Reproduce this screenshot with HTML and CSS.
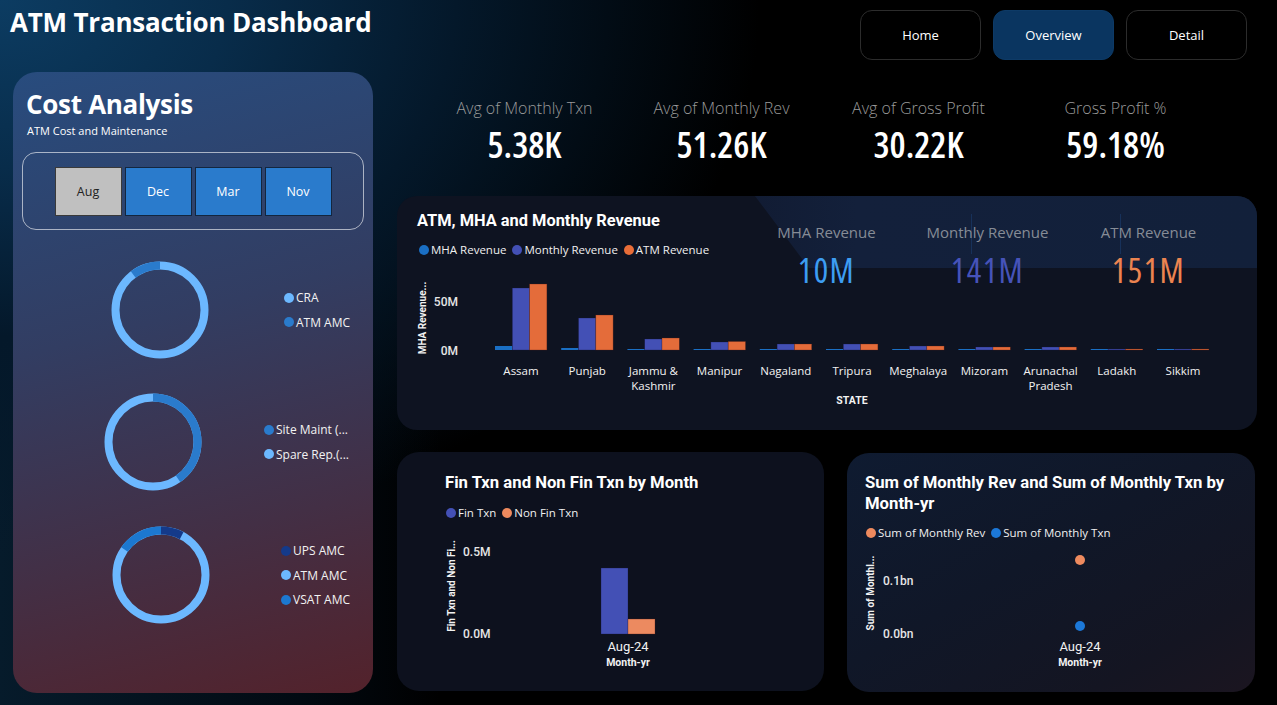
FILE: index.html
```html
<!DOCTYPE html>
<html lang="en">
<head>
<meta charset="utf-8">
<title>ATM Transaction Dashboard</title>
<link rel="stylesheet" href="styles.css">
</head>
<body>
<div class="dash">
  <div class="left">
    <h1 class="title">ATM Transaction Dashboard</h1>
    <section class="cost">
      <h2 class="cost-title">Cost Analysis</h2>
      <p class="cost-sub">ATM Cost and Maintenance</p>
      <div class="slicer">
        <div class="seg on">Aug</div>
        <div class="seg">Dec</div>
        <div class="seg">Mar</div>
        <div class="seg">Nov</div>
      </div>
      <div class="donuts">
        <div class="drow d1">
          <svg class="donut" viewBox="0 0 106 106">
            <circle class="ring c-light" cx="53" cy="53" r="44.5" pathLength="100"/>
            <circle class="ring c-mid" cx="53" cy="53" r="44.5" pathLength="100" stroke-dasharray="10.3 89.7" stroke-dashoffset="-89.7"/>
          </svg>
          <div class="legend">
            <div class="li"><span class="dot b-light"></span>CRA</div>
            <div class="li"><span class="dot b-mid"></span>ATM AMC</div>
          </div>
        </div>
        <div class="drow d2">
          <svg class="donut" viewBox="0 0 106 106">
            <circle class="ring c-light" cx="53" cy="53" r="44.5" pathLength="100"/>
            <circle class="ring c-mid" cx="53" cy="53" r="44.5" pathLength="100" stroke-dasharray="40.5 59.5" stroke-dashoffset="0"/>
          </svg>
          <div class="legend">
            <div class="li"><span class="dot b-mid"></span>Site Maint (...</div>
            <div class="li"><span class="dot b-light"></span>Spare Rep.(...</div>
          </div>
        </div>
        <div class="drow d3">
          <svg class="donut" viewBox="0 0 106 106">
            <circle class="ring c-light" cx="53" cy="53" r="44.5" pathLength="100"/>
            <circle class="ring c-dark" cx="53" cy="53" r="44.5" pathLength="100" stroke-dasharray="7.7 92.3" stroke-dashoffset="0"/>
            <circle class="ring c-vsat" cx="53" cy="53" r="44.5" pathLength="100" stroke-dasharray="15.3 84.7" stroke-dashoffset="-84.7"/>
          </svg>
          <div class="legend">
            <div class="li"><span class="dot b-dark"></span>UPS AMC</div>
            <div class="li"><span class="dot b-light"></span>ATM AMC</div>
            <div class="li"><span class="dot b-vsat"></span>VSAT AMC</div>
          </div>
        </div>
      </div>
    </section>
  </div>

  <div class="right">
    <nav class="nav">
      <div class="btn">Home</div>
      <div class="btn on">Overview</div>
      <div class="btn">Detail</div>
    </nav>

    <div class="kpis">
      <div class="kpi"><div class="kpi-l">Avg of Monthly Txn</div><div class="kpi-v">5.38K</div></div>
      <div class="kpi"><div class="kpi-l">Avg of Monthly Rev</div><div class="kpi-v">51.26K</div></div>
      <div class="kpi"><div class="kpi-l">Avg of Gross Profit</div><div class="kpi-v">30.22K</div></div>
      <div class="kpi"><div class="kpi-l">Gross Profit %</div><div class="kpi-v">59.18%</div></div>
    </div>

    <section class="card rev">
      <h3 class="card-title">ATM, MHA and Monthly Revenue</h3>
      <div class="clegend">
        <span class="cli"><span class="dot b-mha"></span>MHA Revenue</span>
        <span class="cli"><span class="dot b-mon"></span>Monthly Revenue</span>
        <span class="cli"><span class="dot b-atm"></span>ATM Revenue</span>
      </div>
      <svg class="plot rev-plot" width="860" height="164" viewBox="0 0 860 164">
        <text class="ytitle" transform="translate(29 52) rotate(-90)" text-anchor="middle">MHA Revenue...</text>
        <text class="ynum" x="61" y="40" text-anchor="end">50M</text>
        <text class="ynum" x="61" y="89" text-anchor="end">0M</text>
        <g transform="translate(124 0)"><rect class="r-mha" x="-26" y="80" width="17.3" height="4"/><rect class="r-mon" x="-8.7" y="22" width="17.3" height="62"/><rect class="r-atm" x="8.6" y="18" width="17.3" height="66"/></g>
        <g transform="translate(190.2 0)"><rect class="r-mha" x="-26" y="82" width="17.3" height="2"/><rect class="r-mon" x="-8.7" y="52" width="17.3" height="32"/><rect class="r-atm" x="8.6" y="49" width="17.3" height="35"/></g>
        <g transform="translate(256.4 0)"><rect class="r-mha" x="-26" y="83" width="17.3" height="1"/><rect class="r-mon" x="-8.7" y="73" width="17.3" height="11"/><rect class="r-atm" x="8.6" y="72" width="17.3" height="12"/></g>
        <g transform="translate(322.6 0)"><rect class="r-mha" x="-26" y="83" width="17.3" height="1"/><rect class="r-mon" x="-8.7" y="76" width="17.3" height="8"/><rect class="r-atm" x="8.6" y="75.5" width="17.3" height="8.5"/></g>
        <g transform="translate(388.8 0)"><rect class="r-mha" x="-26" y="83" width="17.3" height="1"/><rect class="r-mon" x="-8.7" y="78" width="17.3" height="6"/><rect class="r-atm" x="8.6" y="78" width="17.3" height="6"/></g>
        <g transform="translate(455 0)"><rect class="r-mha" x="-26" y="83" width="17.3" height="1"/><rect class="r-mon" x="-8.7" y="78" width="17.3" height="6"/><rect class="r-atm" x="8.6" y="78" width="17.3" height="6"/></g>
        <g transform="translate(521.2 0)"><rect class="r-mha" x="-26" y="83" width="17.3" height="1"/><rect class="r-mon" x="-8.7" y="80" width="17.3" height="4"/><rect class="r-atm" x="8.6" y="80" width="17.3" height="4"/></g>
        <g transform="translate(587.4 0)"><rect class="r-mha" x="-26" y="83" width="17.3" height="1"/><rect class="r-mon" x="-8.7" y="81" width="17.3" height="3"/><rect class="r-atm" x="8.6" y="81" width="17.3" height="3"/></g>
        <g transform="translate(653.6 0)"><rect class="r-mha" x="-26" y="83" width="17.3" height="1"/><rect class="r-mon" x="-8.7" y="81" width="17.3" height="3"/><rect class="r-atm" x="8.6" y="81" width="17.3" height="3"/></g>
        <g transform="translate(719.8 0)"><rect class="r-mha" x="-26" y="83" width="17.3" height="1"/><rect class="r-mon" x="-8.7" y="83" width="17.3" height="1"/><rect class="r-atm" x="8.6" y="83" width="17.3" height="1"/></g>
        <g transform="translate(786 0)"><rect class="r-mha" x="-26" y="83" width="17.3" height="1"/><rect class="r-mon" x="-8.7" y="83" width="17.3" height="1"/><rect class="r-atm" x="8.6" y="83" width="17.3" height="1"/></g>
        <text class="xlab" x="124" y="109" text-anchor="middle">Assam</text>
        <text class="xlab" x="190.2" y="109" text-anchor="middle">Punjab</text>
        <text class="xlab" x="256.4" y="109" text-anchor="middle">Jammu &amp;</text>
        <text class="xlab" x="256.4" y="124" text-anchor="middle">Kashmir</text>
        <text class="xlab" x="322.6" y="109" text-anchor="middle">Manipur</text>
        <text class="xlab" x="388.8" y="109" text-anchor="middle">Nagaland</text>
        <text class="xlab" x="455" y="109" text-anchor="middle">Tripura</text>
        <text class="xlab" x="521.2" y="109" text-anchor="middle">Meghalaya</text>
        <text class="xlab" x="587.4" y="109" text-anchor="middle">Mizoram</text>
        <text class="xlab" x="653.6" y="109" text-anchor="middle">Arunachal</text>
        <text class="xlab" x="653.6" y="124" text-anchor="middle">Pradesh</text>
        <text class="xlab" x="719.8" y="109" text-anchor="middle">Ladakh</text>
        <text class="xlab" x="786" y="109" text-anchor="middle">Sikkim</text>
        <text class="xtitle" x="455" y="138" text-anchor="middle">STATE</text>
      </svg>
      <div class="rev-kpis">
        <span class="sep sep1"></span>
        <span class="sep sep2"></span>
        <div class="rk"><div class="rk-l">MHA Revenue</div><div class="rk-v v-mha">10M</div></div>
        <div class="rk"><div class="rk-l">Monthly Revenue</div><div class="rk-v v-mon">141M</div></div>
        <div class="rk"><div class="rk-l">ATM Revenue</div><div class="rk-v v-atm">151M</div></div>
      </div>
    </section>

    <div class="bottom">
      <section class="card fin">
        <h3 class="card-title">Fin Txn and Non Fin Txn by Month</h3>
        <div class="clegend">
          <span class="cli"><span class="dot b-mon"></span>Fin Txn</span>
          <span class="cli"><span class="dot b-non"></span>Non Fin Txn</span>
        </div>
        <svg class="plot" width="427" height="164" viewBox="0 0 427 164">
          <text class="ytitle" transform="translate(58 62) rotate(-90)" text-anchor="middle">Fin Txn and Non Fi...</text>
          <text class="ynum" x="66" y="32">0.5M</text>
          <text class="ynum" x="66" y="114">0.0M</text>
          <rect class="r-mon" x="204" y="44" width="27" height="66"/>
          <rect class="r-non" x="231" y="95" width="27" height="15"/>
          <text class="xlab big" x="231" y="127" text-anchor="middle">Aug-24</text>
          <text class="xtitle" x="231" y="142" text-anchor="middle">Month-yr</text>
        </svg>
      </section>
      <section class="card sum">
        <h3 class="card-title">Sum of Monthly Rev and Sum of Monthly Txn by<br>Month-yr</h3>
        <div class="clegend">
          <span class="cli"><span class="dot b-non"></span>Sum of Monthly Rev</span>
          <span class="cli"><span class="dot b-txn"></span>Sum of Monthly Txn</span>
        </div>
        <svg class="plot" width="408" height="151" viewBox="0 0 408 151">
          <text class="ytitle" transform="translate(27 52) rotate(-90)" text-anchor="middle">Sum of Monthl...</text>
          <text class="ynum" x="36" y="44">0.1bn</text>
          <text class="ynum" x="36" y="97">0.0bn</text>
          <circle class="p-rev" cx="233" cy="19" r="5"/>
          <circle class="p-txn" cx="233" cy="85" r="5"/>
          <text class="xlab big" x="233" y="110" text-anchor="middle">Aug-24</text>
          <text class="xtitle" x="233" y="125" text-anchor="middle">Month-yr</text>
        </svg>
      </section>
    </div>
  </div>
</div>
</body>
</html>
```

FILE: styles.css
```css
* { box-sizing: border-box; }

body {
  margin: 0;
  width: 1277px;
  height: 705px;
  overflow: hidden;
  color: #fff;
  font-family: "Open Sans", "Noto Sans", sans-serif;
  background:
    radial-gradient(ellipse 760px 560px at 0 0, #0c3c62 0%, #082c4a 30%, #04182a 60%, rgba(0, 0, 0, 0) 100%),
    linear-gradient(90deg, #061b2b 0, #020a12 300px, #000 440px),
    #000;
}

.dash { display: flex; height: 705px; }

.left { width: 397px; flex: none; }

.title {
  margin: 0;
  height: 72px;
  padding: 6px 0 0 10px;
  font-size: 26px;
  font-weight: 700;
  line-height: 32px;
  letter-spacing: -0.2px;
}

.cost {
  margin-left: 13px;
  width: 360px;
  height: 621px;
  border-radius: 24px;
  padding-top: 16px;
  background: linear-gradient(165deg, #284c7e 0%, #323d62 40%, #432f45 72%, #53222b 100%);
}

.cost-title {
  margin: 0;
  padding-left: 13px;
  font-size: 26px;
  line-height: 32px;
  font-weight: 700;
  letter-spacing: -0.3px;
}

.cost-sub {
  margin: 3px 0 0;
  padding-left: 14px;
  font-size: 11px;
  line-height: 16px;
}

.slicer {
  margin: 13px 0 0 9px;
  width: 342px;
  height: 78px;
  border: 1px solid rgba(255, 255, 255, 0.6);
  border-radius: 14px;
  display: flex;
  justify-content: center;
  align-items: center;
  gap: 3px;
}

.seg {
  width: 67px;
  height: 49px;
  display: flex;
  align-items: center;
  justify-content: center;
  font-size: 12.5px;
  background: #2a7bcc;
  border: 1px solid #13263f;
  color: #fff;
}
.seg.on { background: #c0c0c0; color: #222; border-color: #3a3a3a; }

.donuts { margin-top: 14px; }

.drow { height: 132px; display: flex; align-items: center; }
.drow.d3 { height: 134px; }
.donut { flex: none; width: 106px; height: 106px; }
.d1 .donut { margin-left: 94px; }
.d1 .legend { margin-left: 71px; }
.d2 .donut { margin-left: 87px; }
.d2 .legend { margin-left: 58px; }
.d3 .donut { margin-left: 95px; }
.d3 .legend { margin-left: 67px; }

.ring { fill: none; stroke-width: 8; transform: rotate(-90deg); transform-origin: 53px 53px; }
.c-light { stroke: #6cb8ff; }
.c-mid { stroke: #2a7bcc; }
.c-dark { stroke: #143a8a; }
.c-vsat { stroke: #1c78d0; }

.legend { display: flex; flex-direction: column; gap: 6.5px; }
.li {
  display: flex;
  align-items: center;
  gap: 2px;
  height: 18px;
  font-size: 12px;
  color: #f2f2f2;
  white-space: nowrap;
}
.dot { flex: none; width: 10px; height: 10px; border-radius: 50%; display: inline-block; }
.b-light { background: #6cb8ff; }
.b-mid { background: #2a7bcc; }
.b-dark { background: #143a8a; }
.b-vsat { background: #1c78d0; }
.b-mha { background: #1a6fc4; }
.b-mon { background: #4350b5; }
.b-atm { background: #e86d38; }
.b-non { background: #ee8a5e; }
.b-txn { background: #1c78d8; }

/* right column */
.right { width: 880px; flex: none; }

.nav {
  display: flex;
  justify-content: flex-end;
  gap: 12px;
  height: 60px;
  padding: 10px 30px 0 0;
}
.btn {
  width: 121px;
  height: 50px;
  border-radius: 12px;
  border: 1px solid #2c2c2c;
  background: #000;
  display: flex;
  align-items: center;
  justify-content: center;
  font-size: 13px;
  color: #fff;
}
.btn.on { background: #0a3560; border-color: #0d3a66; }

.kpis { display: flex; padding-left: 29px; margin-top: 38px; }
.kpi { width: 197px; text-align: center; }
.kpi-l { font-size: 16px; line-height: 20px; color: #9a9a9a; font-weight: 300; }
.kpi-v {
  margin-top: 7px;
  font-family: "Open Sans", sans-serif;
  font-stretch: 80%;
  font-size: 36px;
  line-height: 40px;
  font-weight: 600;
  color: #fff;
}

.card {
  position: relative;
  overflow: hidden;
  border-radius: 20px;
  background: #0e1321;
}

.card-title {
  margin: 0;
  font-family: Roboto, "Noto Sans", sans-serif;
  font-weight: 700;
  font-size: 16.7px;
  line-height: 22px;
  color: #fff;
  white-space: nowrap;
}

.clegend {
  display: flex;
  gap: 6px;
  font-size: 11.5px;
  line-height: 16px;
  color: #f0f0f0;
  white-space: nowrap;
}
.cli { display: flex; align-items: center; gap: 2px; }

.plot { display: block; }
.ytitle { font-family: Roboto, sans-serif; font-weight: 700; font-size: 10px; fill: #f2f2f2; }
.ynum { font-family: Roboto, sans-serif; font-weight: 500; font-size: 12px; fill: #e6e6e6; }
.xlab { font-family: "Open Sans", sans-serif; font-size: 11.5px; fill: #f2f2f2; }
.xlab.big { font-family: Roboto, sans-serif; font-size: 13px; }
.xtitle { font-family: Roboto, sans-serif; font-weight: 700; font-size: 10.5px; fill: #f2f2f2; }

.r-mha { fill: #1a6fc4; }
.r-mon { fill: #4350b5; stroke: rgba(20, 20, 60, 0.5); stroke-width: 0.6; }
.r-atm { fill: #e46c3a; stroke: rgba(90, 30, 20, 0.5); stroke-width: 0.6; }
.r-non { fill: #ec8a60; stroke: rgba(90, 30, 20, 0.5); stroke-width: 0.6; }
.p-rev { fill: #ee8a5e; }
.p-txn { fill: #1c78d8; }

/* revenue card */
.rev { width: 860px; height: 234px; margin-top: 31px; }
.rev .card-title { padding: 14px 0 0 20px; font-size: 16.4px; }
.rev .clegend { margin-top: 10px; padding-left: 22px; }
.rev-plot { margin-top: 8px; }

.rev-kpis {
  position: absolute;
  top: 0;
  left: 340px;
  right: 0;
  height: 100px;
  display: flex;
  padding-left: 9px;
}
.rev-kpis::before {
  content: "";
  position: absolute;
  top: 0;
  left: 0;
  right: 0;
  height: 72px;
  clip-path: polygon(18px 0, 100% 0, 100% 100%, 72px 100%);
  background: linear-gradient(90deg, #111b32 0px, #13203b 120px, #12203a 100%);
}
.sep { position: absolute; top: 18px; width: 1px; height: 40px; background: #17315a; }
.sep1 { left: 234px; }
.sep2 { left: 383px; }
.rk { position: relative; width: 161px; text-align: center; }
.rk-l { padding-top: 26px; font-size: 15px; line-height: 20px; color: #868c96; }
.rk-v {
  margin-top: 9px;
  font-family: "Open Sans", sans-serif;
  font-stretch: 75%;
  font-size: 34px;
  line-height: 38px;
  letter-spacing: 1.5px;
}
.v-mha { color: #3d9df2; }
.v-mon { color: #4653b9; }
.v-atm { color: #ec8450; }

/* bottom cards */
.bottom { display: flex; gap: 23px; margin-top: 22px; }

.fin { width: 427px; height: 239px; border-radius: 22px; background: #0d111e; }
.fin .card-title { padding: 20px 0 0 48px; }
.fin .clegend { margin-top: 11px; padding-left: 49px; }
.fin .plot { margin-top: 3px; }

.sum {
  width: 408px;
  height: 239px;
  margin-top: 1px;
  border-radius: 22px;
  background: linear-gradient(150deg, #0f1b31 0%, #101728 45%, #141522 80%, #1b1520 100%);
}
.sum .card-title { padding: 19px 0 0 18px; line-height: 21px; }
.sum .clegend { margin-top: 11px; padding-left: 19px; }
```
